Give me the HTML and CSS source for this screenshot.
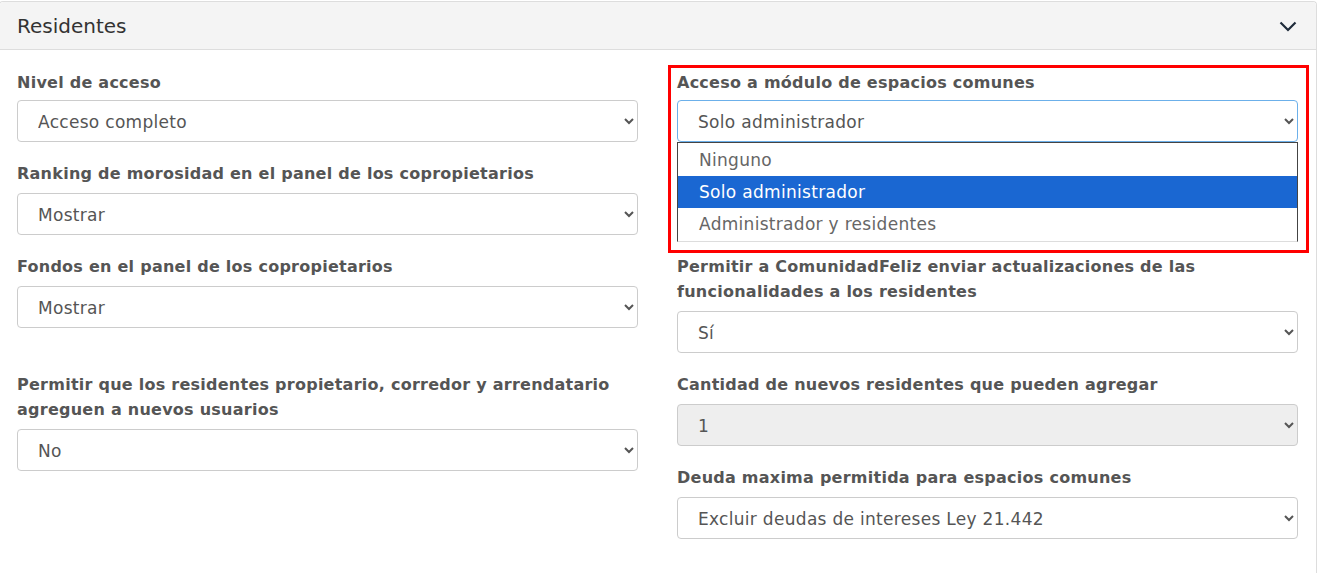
FILE: index.html
```
<!DOCTYPE html>
<html>
<head>
	<title>Residentes</title>
	<link rel="stylesheet" href="styles.css">
</head>
<body>
	<div class="panel">
		<div class="panel-heading">
			<span class="panel-title">Residentes</span>
			<svg class="toggle" width="18" height="11" viewBox="0 0 18 11">
				<polyline points="1.5,1.5 9,9 16.5,1.5" fill="none" stroke="#1f2b3a" stroke-width="2.2"/>
			</svg>
		</div>
		<div class="panel-body">
			<div class="col">
				<div class="form-group">
					<label>Nivel de acceso</label>
					<select><option>Acceso completo</option></select>
				</div>
				<div class="form-group">
					<label>Ranking de morosidad en el panel de los copropietarios</label>
					<select><option>Mostrar</option></select>
				</div>
				<div class="form-group spaced">
					<label>Fondos en el panel de los copropietarios</label>
					<select><option>Mostrar</option></select>
				</div>
				<div class="form-group">
					<label>Permitir que los residentes propietario, corredor y arrendatario agreguen a nuevos usuarios</label>
					<select><option>No</option></select>
				</div>
			</div>
			<div class="col">
				<div class="form-group open">
					<label>Acceso a módulo de espacios comunes</label>
					<select class="focused"><option>Solo administrador</option></select>
					<ul class="dropdown">
						<li>Ninguno</li>
						<li class="selected">Solo administrador</li>
						<li>Administrador y residentes</li>
					</ul>
					<div class="mark"></div>
				</div>
				<div class="form-group hidden-field"></div>
				<div class="form-group">
					<label>Permitir a ComunidadFeliz enviar actualizaciones de las funcionalidades a los residentes</label>
					<select><option>Sí</option></select>
				</div>
				<div class="form-group">
					<label>Cantidad de nuevos residentes que pueden agregar</label>
					<select disabled><option>1</option></select>
				</div>
				<div class="form-group">
					<label>Deuda maxima permitida para espacios comunes</label>
					<select><option>Excluir deudas de intereses Ley 21.442</option></select>
				</div>
			</div>
		</div>
	</div>
</body>
</html>
```
FILE: styles.css
```
body {
	font-family: "DejaVu Sans", "Open Sans", sans-serif;
	margin: 0;
	padding: 0;
	background: #fff;
	color: #555;
}

.panel {
	margin: 1px 1px 0 -1px;
	border: 1px solid #ddd;
	border-radius: 4px 4px 0 0;
	border-bottom: none;
}

.panel-heading {
	height: 47px;
	background-color: #f4f4f4;
	border-bottom: 1px solid #ddd;
	border-radius: 4px 4px 0 0;
	display: flex;
	align-items: center;
	justify-content: space-between;
	padding: 0 19px 0 17px;
}

.panel-title {
	font-size: 20px;
	color: #333;
}

.toggle {
	display: block;
	margin-top: 2px;
}

.panel-body {
	display: grid;
	grid-template-columns: 1fr 1fr;
	column-gap: 39px;
	padding: 20px 18px 20px 17px;
}

.form-group {
	margin-bottom: 19px;
}

.form-group.spaced {
	margin-bottom: 44px;
}

.form-group label {
	display: block;
	font-size: 16px;
	font-weight: bold;
	letter-spacing: 0.25px;
	line-height: 25px;
	color: #555;
	margin-bottom: 7px;
}

.col > .form-group:first-child label {
	margin-bottom: 5px;
}

.form-group select {
	display: block;
	width: 100%;
	height: 42px;
	font-family: inherit;
	font-size: 17px;
	letter-spacing: 0.3px;
	color: #555;
	background-color: #fff;
	border: 1px solid #ccc;
	border-radius: 4px;
	padding: 1px 12px 0 16px;
}

.form-group select.focused {
	border-color: #6cb0ea;
	outline: none;
}

.form-group select:disabled {
	background-color: #eee;
	color: #555;
	opacity: 1;
}

.hidden-field {
	height: 74px;
}

.open {
	position: relative;
}

.dropdown {
	position: absolute;
	left: 0;
	right: 0;
	top: 72px;
	margin: 0;
	padding: 1px 0 1px 0;
	list-style: none;
	background: #fff;
	border: 1px solid #444;
	border-bottom-color: #ddd;
	z-index: 2;
}

.dropdown li {
	height: 32px;
	line-height: 32px;
	padding-left: 21px;
	font-size: 17px;
	letter-spacing: 0.3px;
	color: #666;
}

.dropdown li.selected {
	background-color: #1a67d2;
	color: #fff;
}

.mark {
	position: absolute;
	left: -9px;
	right: -11px;
	top: -5px;
	height: 188px;
	box-sizing: border-box;
	border: 3px solid #f00;
	z-index: 3;
	pointer-events: none;
}
```
